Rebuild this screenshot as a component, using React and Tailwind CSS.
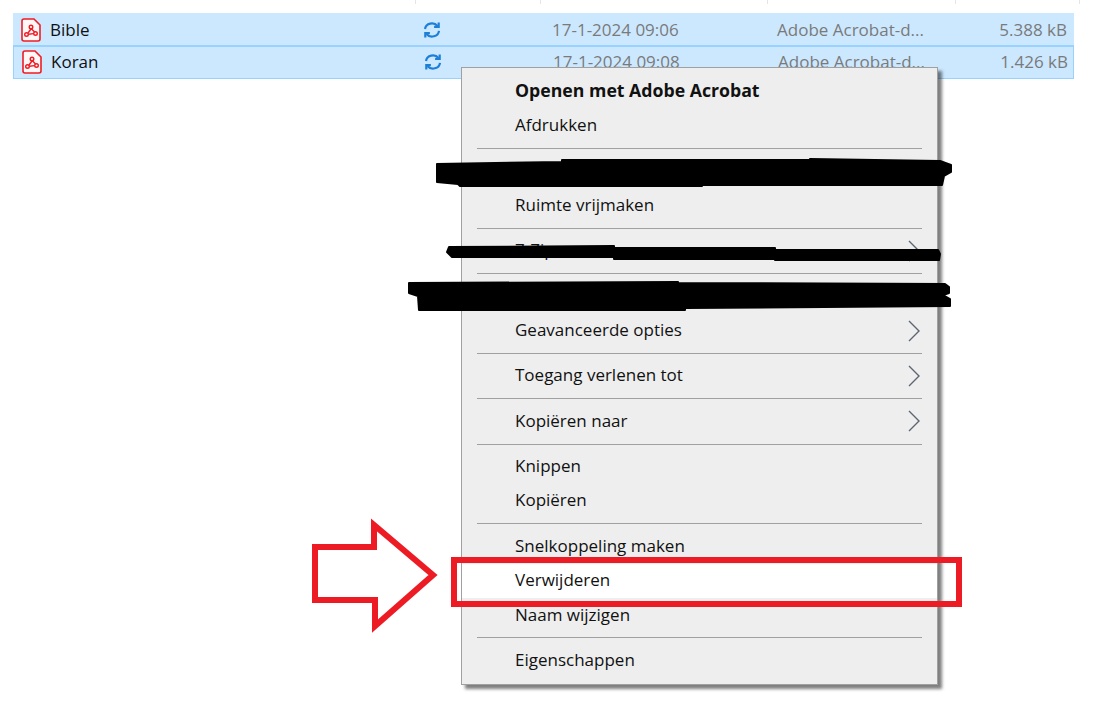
import React from 'react';

const rows = [
  { name: 'Bible', date: '17-1-2024 09:06', type: 'Adobe Acrobat-d...', size: '5.388 kB' },
  { name: 'Koran', date: '17-1-2024 09:08', type: 'Adobe Acrobat-d...', size: '1.426 kB' },
];

const menu = [
  { label: 'Openen met Adobe Acrobat', bold: true },
  { label: 'Afdrukken' },
  { sep: true },
  { label: '' },
  { label: 'Ruimte vrijmaken' },
  { sep: true },
  { label: '7-Zip', arrow: true },
  { sep: true },
  { label: '' },
  { label: 'Geavanceerde opties', arrow: true },
  { sep: true },
  { label: 'Toegang verlenen tot', arrow: true },
  { sep: true },
  { label: 'Kopiëren naar', arrow: true },
  { sep: true },
  { label: 'Knippen' },
  { label: 'Kopiëren' },
  { sep: true },
  { label: 'Snelkoppeling maken' },
  { label: 'Verwijderen', hover: true },
  { label: 'Naam wijzigen' },
  { sep: true },
  { label: 'Eigenschappen' },
];

function PdfIcon() {
  return (
    <svg width="20" height="24" viewBox="0 0 20 24" fill="none" stroke="#ee1c25" className="shrink-0">
      <path d="M3 1h10l6 6v14a2 2 0 0 1-2 2H3a2 2 0 0 1-2-2V3a2 2 0 0 1 2-2z" strokeWidth="1.6" fill="#fff6f6" />
      <circle cx="10" cy="9" r="1.8" strokeWidth="1.4" />
      <circle cx="5.5" cy="16.5" r="1.8" strokeWidth="1.4" />
      <circle cx="14.5" cy="15.5" r="1.8" strokeWidth="1.4" />
      <path d="M10 11l-3 4M7.5 16.2l5-.6M10.6 11l3 3" strokeWidth="1.4" />
    </svg>
  );
}

function SyncIcon() {
  return (
    <svg width="18" height="18" viewBox="0 0 18 18" fill="none" stroke="#1e7fd8" strokeWidth="2.2" className="shrink-0">
      <path d="M2 8a7 6.5 0 0 1 12.5-3" />
      <path d="M16 9.8a7 6.5 0 0 1-12.5 3.2" />
      <path d="M15.7 1.5v4.4h-4.6M2.3 16.5v-4.4h4.6" />
    </svg>
  );
}

function Chevron() {
  return (
    <svg width="14" height="22" viewBox="0 0 14 22" fill="none" stroke="#5c6670" strokeWidth="1.4">
      <path d="M2 1l10 10L2 21" />
    </svg>
  );
}

export default function App() {
  return (
    <div className="relative w-[1101px] h-[703px] overflow-hidden bg-white text-[17px] text-[#111] font-['Open_Sans','Noto_Sans',sans-serif]">
      {/* column header ticks */}
      <div className="h-[13px] flex">
        <div className="w-[416px] border-r border-[#e5e5e5] h-[4px]" />
        <div className="w-[125px] border-r border-[#e5e5e5] h-[4px]" />
        <div className="w-[227px] border-r border-[#e5e5e5] h-[4px]" />
        <div className="w-[188px] border-r border-[#e5e5e5] h-[4px]" />
        <div className="w-[124px] border-r border-[#e5e5e5] h-[4px]" />
      </div>

      <div className="ml-[13px] w-[1061px]">
        {rows.map((r, i) => (
          <div
            key={r.name}
            className={`flex items-center bg-[#cce8ff] ${i === 0 ? 'h-[34px] pt-[2px] border-b-2 border-[#99d1ff]' : 'h-[32px] pb-[1px] border border-[#99d1ff] border-t-0'}`}
          >
            <div className="w-[37px] pl-[8px] flex items-center">
              <PdfIcon />
            </div>
            <div className="w-[373px] text-[#111]">{r.name}</div>
            <SyncIcon />
            <div className="ml-[111px] w-[225px] text-[#7a7a7a]">{r.date}</div>
            <div className="w-[190px] text-[#7a7a7a]">{r.type}</div>
            <div className="w-[100px] text-right text-[#7a7a7a]">{r.size}</div>
          </div>
        ))}
      </div>

      {/* context menu */}
      <div className="absolute left-[461px] top-[67px] w-[477px] h-[618px] bg-[#eeeeee] border border-[#a0a0a0] shadow-[4px_4px_3px_rgba(0,0,0,0.5)] pt-[6px]">
        {menu.map((m, i) =>
          m.sep ? (
            <div key={i} className="h-[11px] flex items-center px-[15px]">
              <div className="w-full h-[1px] bg-[#a0a0a0]" />
            </div>
          ) : (
            <div
              key={i}
              className={`h-[34.4px] flex items-center justify-between pl-[53px] pr-[16px] ${m.hover ? 'bg-white' : ''} ${m.bold ? 'font-bold text-[17.7px]' : ''}`}
            >
              <span className="pb-[2px]">{m.label}</span>
              {m.arrow && <Chevron />}
            </div>
          )
        )}
      </div>

      {/* black marker over the menu */}
      <svg className="absolute left-0 top-0 pointer-events-none" width="1101" height="703" fill="#000" stroke="#000" strokeWidth="2" strokeLinejoin="round">
        <path d="M437 164L562 162L562 160L810 160L810 159L940 161L951 165L951 172L944 176L942 185L702 185L702 186L460 186L458 184L437 182Z" />
        <path d="M449 247L614 246L614 248L775 248L775 250L938 250L940 254L939 260L775 260L775 259L614 259L614 257L452 257L447 252Z" />
        <path d="M409 283L678 282L678 283L945 284L949 287L949 293L943 295L950 299L950 306L685 308L685 310L419 310L418 296L409 293Z" />
        {/* red arrow and box */}
        <path d="M315 547h59v-22l59 50-58 51v-26h-60z" fill="none" stroke="#ed1c24" strokeWidth="6" strokeLinejoin="miter" />
        <rect x="454" y="560" width="505" height="44" fill="none" stroke="#ed1c24" strokeWidth="6" strokeLinejoin="miter" />
      </svg>
    </div>
  );
}
